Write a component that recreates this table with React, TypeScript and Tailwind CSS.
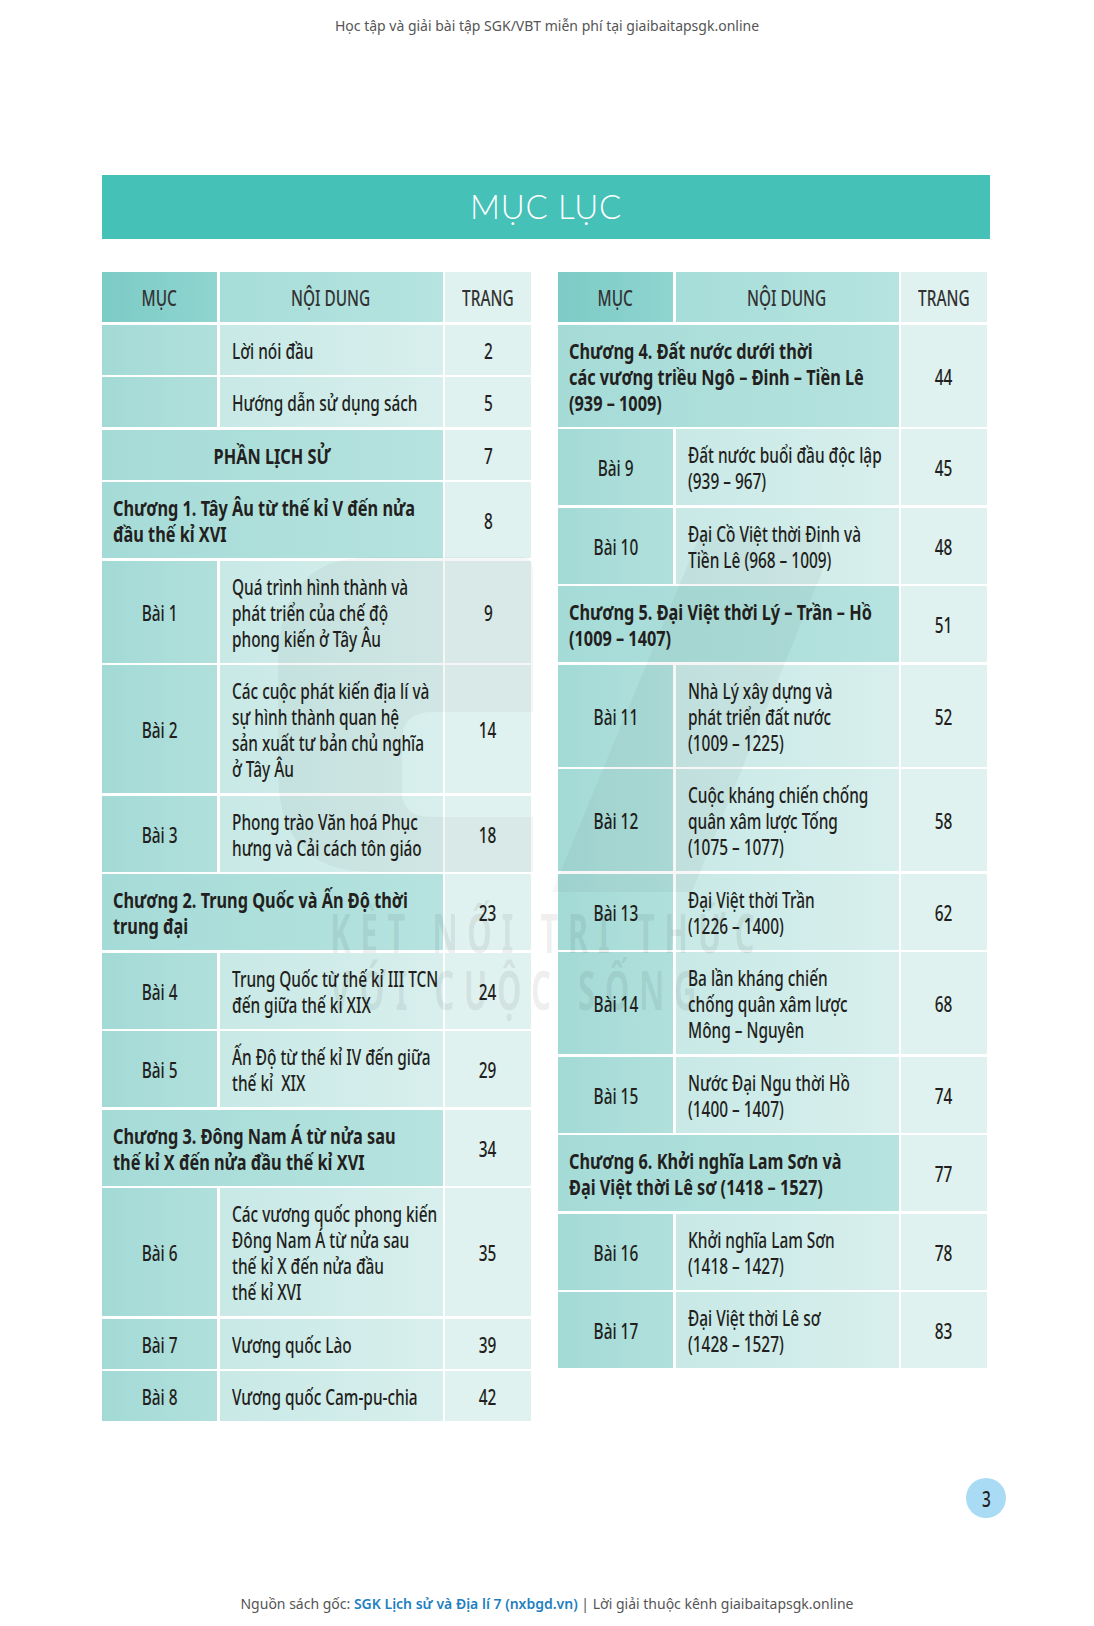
import React from 'react';

type Row =
  | { kind: 'intro'; text: string; page: string }
  | { kind: 'part'; text: string; page: string }
  | { kind: 'chapter'; lines: string[]; page: string }
  | { kind: 'lesson'; label: string; lines: string[]; page: string };

const LEFT: Row[] = [
  { kind: 'intro', text: 'Lời nói đầu', page: '2' },
  { kind: 'intro', text: 'Hướng dẫn sử dụng sách', page: '5' },
  { kind: 'part', text: 'PHẦN LỊCH SỬ', page: '7' },
  { kind: 'chapter', lines: ['Chương 1. Tây Âu từ thế kỉ V đến nửa', 'đầu thế kỉ XVI'], page: '8' },
  { kind: 'lesson', label: 'Bài 1', lines: ['Quá trình hình thành và', 'phát triển của chế độ', 'phong kiến ở Tây Âu'], page: '9' },
  { kind: 'lesson', label: 'Bài 2', lines: ['Các cuộc phát kiến địa lí và', 'sự hình thành quan hệ', 'sản xuất tư bản chủ nghĩa', 'ở Tây Âu'], page: '14' },
  { kind: 'lesson', label: 'Bài 3', lines: ['Phong trào Văn hoá Phục', 'hưng và Cải cách tôn giáo'], page: '18' },
  { kind: 'chapter', lines: ['Chương 2. Trung Quốc và Ấn Độ thời', 'trung đại'], page: '23' },
  { kind: 'lesson', label: 'Bài 4', lines: ['Trung Quốc từ thế kỉ III TCN', 'đến giữa thế kỉ XIX'], page: '24' },
  { kind: 'lesson', label: 'Bài 5', lines: ['Ấn Độ từ thế kỉ IV đến giữa', 'thế kỉ  XIX'], page: '29' },
  { kind: 'chapter', lines: ['Chương 3. Đông Nam Á từ nửa sau', 'thế kỉ X đến nửa đầu thế kỉ XVI'], page: '34' },
  { kind: 'lesson', label: 'Bài 6', lines: ['Các vương quốc phong kiến', 'Đông Nam Á từ nửa sau', 'thế kỉ X đến nửa đầu', 'thế kỉ XVI'], page: '35' },
  { kind: 'lesson', label: 'Bài 7', lines: ['Vương quốc Lào'], page: '39' },
  { kind: 'lesson', label: 'Bài 8', lines: ['Vương quốc Cam-pu-chia'], page: '42' },
];

const RIGHT: Row[] = [
  { kind: 'chapter', lines: ['Chương 4. Đất nước dưới thời', 'các vương triều Ngô – Đinh – Tiền Lê', '(939 – 1009)'], page: '44' },
  { kind: 'lesson', label: 'Bài 9', lines: ['Đất nước buổi đầu độc lập', '(939 – 967)'], page: '45' },
  { kind: 'lesson', label: 'Bài 10', lines: ['Đại Cồ Việt thời Đinh và', 'Tiền Lê (968 – 1009)'], page: '48' },
  { kind: 'chapter', lines: ['Chương 5. Đại Việt thời Lý – Trần – Hồ', '(1009 – 1407)'], page: '51' },
  { kind: 'lesson', label: 'Bài 11', lines: ['Nhà Lý xây dựng và', 'phát triển đất nước', '(1009 – 1225)'], page: '52' },
  { kind: 'lesson', label: 'Bài 12', lines: ['Cuộc kháng chiến chống', 'quân xâm lược Tống', '(1075 – 1077)'], page: '58' },
  { kind: 'lesson', label: 'Bài 13', lines: ['Đại Việt thời Trần', '(1226 – 1400)'], page: '62' },
  { kind: 'lesson', label: 'Bài 14', lines: ['Ba lần kháng chiến', 'chống quân xâm lược', 'Mông – Nguyên'], page: '68' },
  { kind: 'lesson', label: 'Bài 15', lines: ['Nước Đại Ngu thời Hồ', '(1400 – 1407)'], page: '74' },
  { kind: 'chapter', lines: ['Chương 6. Khởi nghĩa Lam Sơn và', 'Đại Việt thời Lê sơ (1418 – 1527)'], page: '77' },
  { kind: 'lesson', label: 'Bài 16', lines: ['Khởi nghĩa Lam Sơn', '(1418 – 1427)'], page: '78' },
  { kind: 'lesson', label: 'Bài 17', lines: ['Đại Việt thời Lê sơ', '(1428 – 1527)'], page: '83' },
];

const cell = 'flex items-center py-3 leading-[26px]';
const mucBg = 'bg-linear-to-r from-[#a3dad6] to-[#b1e0dc]';
const textBg = 'bg-linear-to-r from-[#c8e9e6] to-[#d8efed]';
const pageBg = 'bg-[#e0f2f0]';
const spanBg = 'bg-linear-to-r from-[#a5dbd7] to-[#b6e3df]';

// no condensed face is installed, so the narrow book type is squeezed horizontally
const narrow = 'inline-block whitespace-pre scale-x-[0.7] font-medium';
const narrowBold = 'inline-block whitespace-pre scale-x-[0.74] font-bold';

function Centered({ text, bold }: { text: string; bold?: boolean }) {
  return <span className={bold ? narrowBold : narrow}>{text}</span>;
}

function Lines({ lines, bold }: { lines: string[]; bold?: boolean }) {
  return (
    <div>
      {lines.map((l, i) => (
        <div key={i} className={`${bold ? narrowBold : narrow} block origin-left`}>
          {l}
        </div>
      ))}
    </div>
  );
}

function TocRow({ row }: { row: Row }) {
  if (row.kind === 'intro') {
    return (
      <>
        <div className={`${cell} ${mucBg}`} />
        <div className={`${cell} ${textBg} pl-3`}>
          <Lines lines={[row.text]} />
        </div>
        <div className={`${cell} ${pageBg} justify-center`}>
          <Centered text={row.page} />
        </div>
      </>
    );
  }
  if (row.kind === 'part') {
    return (
      <>
        <div className={`${cell} ${spanBg} col-span-2 justify-center`}>
          <Centered text={row.text} bold />
        </div>
        <div className={`${cell} ${pageBg} justify-center`}>
          <Centered text={row.page} />
        </div>
      </>
    );
  }
  if (row.kind === 'chapter') {
    return (
      <>
        <div className={`${cell} ${spanBg} col-span-2 pl-[11px]`}>
          <Lines lines={row.lines} bold />
        </div>
        <div className={`${cell} ${pageBg} justify-center`}>
          <Centered text={row.page} />
        </div>
      </>
    );
  }
  return (
    <>
      <div className={`${cell} ${mucBg} justify-center`}>
        <Centered text={row.label} />
      </div>
      <div className={`${cell} ${textBg} pl-3`}>
        <Lines lines={row.lines} />
      </div>
      <div className={`${cell} ${pageBg} justify-center`}>
        <Centered text={row.page} />
      </div>
    </>
  );
}

function TocTable({ rows }: { rows: Row[] }) {
  return (
    <div className="grid w-[429px] grid-cols-[115px_223px_86px] content-start gap-[2.5px] text-[22px] text-[#231f20]">
      {/* header */}
      <div className={`${cell} justify-center bg-linear-to-r from-[#7ccbc6] to-[#8fd4cf] text-[#333]`}>
        <Centered text="MỤC" />
      </div>
      <div className={`${cell} justify-center bg-linear-to-r from-[#a6ddd9] to-[#b6e4e0] text-[#333]`}>
        <Centered text="NỘI DUNG" />
      </div>
      <div className={`${cell} justify-center bg-[#dff2f0] text-[#333]`}>
        <Centered text="TRANG" />
      </div>
      {rows.map((r, i) => (
        <TocRow key={i} row={r} />
      ))}
    </div>
  );
}

// faint publisher watermark lying over both tables
function Watermark() {
  return (
    <div className="pointer-events-none absolute inset-0 overflow-hidden">
      <svg className="absolute left-0 top-0" width="893" height="1150" viewBox="0 0 893 1150">
        <path
          d="M176 390 Q176 285 270 285 L420 285 Q431 285 431 300 L431 440 L330 440 Q300 440 300 470 L300 520 Q300 545 330 545 L431 545 L431 600 L270 600 Q176 600 176 500 Z"
          fill="#000"
          opacity="0.035"
        />
        <path d="M450 620 L590 620 L720 300 L720 258 L600 258 Z" fill="#000" opacity="0.035" />
      </svg>
      <div className="absolute left-[228px] top-[633px] inline-block origin-left scale-x-[0.58] whitespace-nowrap text-[54px] font-bold leading-none tracking-[0.3em] text-black/[0.07]">
        KẾT NỐI TRI THỨC
      </div>
      <div className="absolute left-[228px] top-[690px] inline-block origin-left scale-x-[0.58] whitespace-nowrap text-[54px] font-bold leading-none tracking-[0.3em] text-black/[0.07]">
        VỚI CUỘC SỐNG
      </div>
    </div>
  );
}

export default function App() {
  return (
    <div className="relative flex h-[1626px] w-[1094px] flex-col bg-white">
      <div className="flex h-[50px] items-center justify-center font-['Noto_Sans',sans-serif] text-[14px] text-[#555]">
        Học tập và giải bài tập SGK/VBT miễn phí tại giaibaitapsgk.online
      </div>

      <div className="ml-[102px] mt-[125px] w-[888px]">
        <div className="flex h-[64px] items-center justify-center bg-[#45c1b8]">
          <span className="font-['Lato',sans-serif] text-[33px] font-light tracking-[0.02em] text-white">MỤC LỤC</span>
        </div>

        <div className="relative mt-[33px] flex items-start gap-[27px] font-['Noto_Sans',sans-serif]">
          <TocTable rows={LEFT} />
          <TocTable rows={RIGHT} />
          <Watermark />
        </div>
      </div>

      <div className="mt-auto flex justify-end pr-[88px]">
        <div className="flex h-[40px] w-[40px] items-center justify-center rounded-full bg-[#a9dbf5] font-['Noto_Sans',sans-serif] text-[22px] text-[#231f20]">
          <span className="inline-block scale-x-[0.7] font-medium">3</span>
        </div>
      </div>

      <div className="mt-[62px] flex h-[46px] items-center justify-center font-['Noto_Sans',sans-serif] text-[14px] text-[#555]">
        <span>
          Nguồn sách gốc: <span className="font-semibold text-[#1f7fc0]">SGK Lịch sử và Địa lí 7 (nxbgd.vn)</span> | Lời giải
          thuộc kênh giaibaitapsgk.online
        </span>
      </div>
    </div>
  );
}
